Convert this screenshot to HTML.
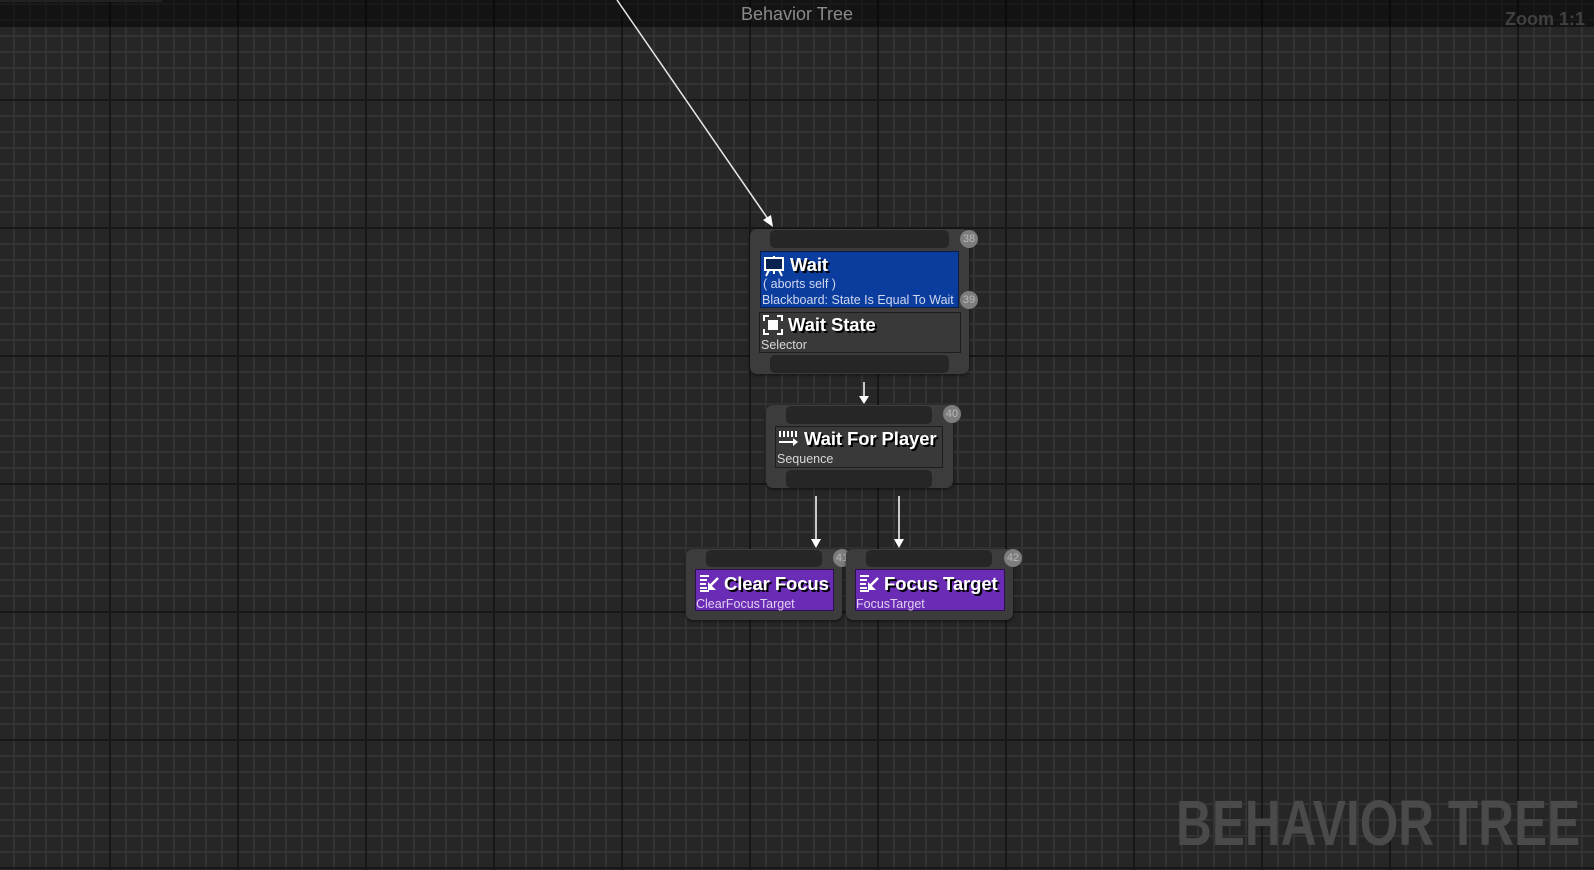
<!DOCTYPE html>
<html><head><meta charset="utf-8"><style>
html,body{margin:0;padding:0;}
body{width:1594px;height:870px;overflow:hidden;position:relative;font-family:"Liberation Sans",sans-serif;
background-color:#262626;
background-image:
linear-gradient(to right, #171717 0 2px, transparent 2px),
linear-gradient(to bottom, #171717 0 2px, transparent 2px),
linear-gradient(to right, #333 0 2px, transparent 2px),
linear-gradient(to bottom, #333 0 2px, transparent 2px);
background-size:128px 128px,128px 128px,16px 16px,16px 16px;
background-position:109px 0,0 99px,13px 0,0 3px;}
.abs{position:absolute;}
.topbar{left:0;top:0;width:1594px;height:27px;background:rgba(0,0,0,0.5);}
.title{left:0;width:1594px;top:4px;text-align:center;color:#8a8a8a;font-size:18px;}
.node{position:absolute;background:#3c3c3c;border-radius:7px;box-shadow:0 1px 3px rgba(0,0,0,.6);}
.pin{position:absolute;background:#262626;border-radius:5px;}
.badge{position:absolute;width:18px;height:18px;border-radius:9px;background:#7d7d7d;color:#b8b8b8;font-size:11px;line-height:18px;text-align:center;}
.box{position:absolute;border:1px solid #1e1e1e;box-sizing:border-box;}
.t{position:absolute;color:#fff;font-weight:bold;font-size:18.5px;text-shadow:2px 2px 0 #000;white-space:nowrap;letter-spacing:-0.1px;}
.s{position:absolute;color:#d8d8d8;font-size:12.5px;white-space:nowrap;}
</style></head><body>
<div class="abs" style="left:0;top:0;width:162px;height:2px;background:#444"></div>
<div class="abs topbar"></div>
<div class="abs title">Behavior Tree</div>
<div class="abs" style="right:9px;top:9px;color:#404040;font-weight:bold;font-size:18px;">Zoom 1:1</div>
<div class="abs" style="left:1176px;top:786px;color:#4a4a4a;font-weight:bold;font-size:64px;font-family:'Liberation Sans',sans-serif;transform:scaleX(0.775);transform-origin:left top;white-space:nowrap;">BEHAVIOR TREE</div>

<svg class="abs" style="left:0;top:0" width="1594" height="870">
<line x1="617" y1="0" x2="768" y2="219" stroke="#e8e8e8" stroke-width="1.5"/>
<polygon points="773,227 763,220 771,215" fill="#fff"/>
<line x1="864" y1="382" x2="864" y2="397" stroke="#fff" stroke-width="1.5"/>
<polygon points="859,396 869,396 864,404" fill="#fff"/>
<line x1="816" y1="496" x2="816" y2="540" stroke="#fff" stroke-width="1.5"/>
<polygon points="811,539 821,539 816,548" fill="#fff"/>
<line x1="899" y1="496" x2="899" y2="540" stroke="#fff" stroke-width="1.5"/>
<polygon points="894,539 904,539 899,548" fill="#fff"/>
</svg>

<!-- Node 1 -->
<div class="node" style="left:750px;top:229px;width:219px;height:145px;"></div>
<div class="pin" style="left:770px;top:230px;width:179px;height:18px;"></div>
<div class="pin" style="left:770px;top:355px;width:179px;height:18px;"></div>
<div class="badge" style="left:960px;top:230px;">38</div>
<div class="box" style="left:760px;top:251px;width:199px;height:57px;background:#0b3d9e;border-color:#0a1e4a;"></div>
<svg class="abs" style="left:763px;top:255px" width="22" height="22" viewBox="0 0 22 22"><rect x="2" y="3" width="18" height="12" fill="#0a2250" stroke="#fff" stroke-width="2"/><path d="M11 1v2M6 15l-3 6M16 15l3 6M11 15v4" stroke="#fff" stroke-width="2"/></svg>
<div class="t" style="left:790px;top:254px;">Wait</div>
<div class="s" style="left:763px;top:277px;color:#d0d8f0;">( aborts self )</div>
<div class="s" style="left:762px;top:293px;color:#d0d8f0;">Blackboard: State Is Equal To Wait</div>
<div class="badge" style="left:960px;top:291px;">39</div>
<div class="box" style="left:759px;top:312px;width:202px;height:41px;background:#393939;"></div>
<svg class="abs" style="left:762px;top:314px" width="22" height="22" viewBox="0 0 22 22"><path d="M2 7V2h5M15 2h5v5M20 15v5h-5M7 20H2v-5" stroke="#fff" stroke-width="2" fill="none"/><rect x="6" y="6" width="10" height="10" fill="#fff"/></svg>
<div class="t" style="left:788px;top:314px;">Wait State</div>
<div class="s" style="left:761px;top:338px;">Selector</div>

<!-- Node 2 -->
<div class="node" style="left:766px;top:405px;width:187px;height:83px;"></div>
<div class="pin" style="left:786px;top:406px;width:146px;height:18px;"></div>
<div class="pin" style="left:786px;top:470px;width:146px;height:18px;"></div>
<div class="badge" style="left:943px;top:405px;">40</div>
<div class="box" style="left:775px;top:426px;width:168px;height:42px;background:#393939;"></div>
<svg class="abs" style="left:777px;top:429px" width="22" height="20" viewBox="0 0 22 20"><path d="M3 2v6M7 2v6M11 2v6M15 2v6M19 2v6" stroke="#fff" stroke-width="2"/><path d="M2 13h16" stroke="#fff" stroke-width="2"/><polygon points="16,9 21,13 16,17" fill="#fff"/></svg>
<div class="t" style="left:804px;top:428px;">Wait For Player</div>
<div class="s" style="left:777px;top:452px;">Sequence</div>

<!-- Leaf 1 -->
<div class="node" style="left:686px;top:549px;width:156px;height:71px;"></div>
<div class="pin" style="left:706px;top:550px;width:116px;height:17px;"></div>
<div class="badge" style="left:833px;top:549px;">41</div>
<div class="box" style="left:695px;top:569px;width:139px;height:42px;background:#6a2cb4;border-color:#2c1050;"></div>
<svg class="abs" style="left:698px;top:573px" width="22" height="20" viewBox="0 0 22 20"><path d="M2 3h9M2 7h7M2 11h6M2 15h7M2 18h9" stroke="#fff" stroke-width="2"/><path d="M20 5l-8 8" stroke="#fff" stroke-width="2.5"/><polygon points="10,9 10,17 18,17" fill="#fff"/></svg>
<div class="t" style="left:724px;top:573px;">Clear Focus</div>
<div class="s" style="left:696px;top:597px;color:#e0d0f0;">ClearFocusTarget</div>

<!-- Leaf 2 -->
<div class="node" style="left:846px;top:549px;width:167px;height:71px;"></div>
<div class="pin" style="left:866px;top:550px;width:126px;height:17px;"></div>
<div class="badge" style="left:1004px;top:549px;">42</div>
<div class="box" style="left:855px;top:569px;width:150px;height:42px;background:#6a2cb4;border-color:#2c1050;"></div>
<svg class="abs" style="left:858px;top:573px" width="22" height="20" viewBox="0 0 22 20"><path d="M2 3h9M2 7h7M2 11h6M2 15h7M2 18h9" stroke="#fff" stroke-width="2"/><path d="M20 5l-8 8" stroke="#fff" stroke-width="2.5"/><polygon points="10,9 10,17 18,17" fill="#fff"/></svg>
<div class="t" style="left:884px;top:573px;">Focus Target</div>
<div class="s" style="left:856px;top:597px;color:#e0d0f0;">FocusTarget</div>
</body></html>
